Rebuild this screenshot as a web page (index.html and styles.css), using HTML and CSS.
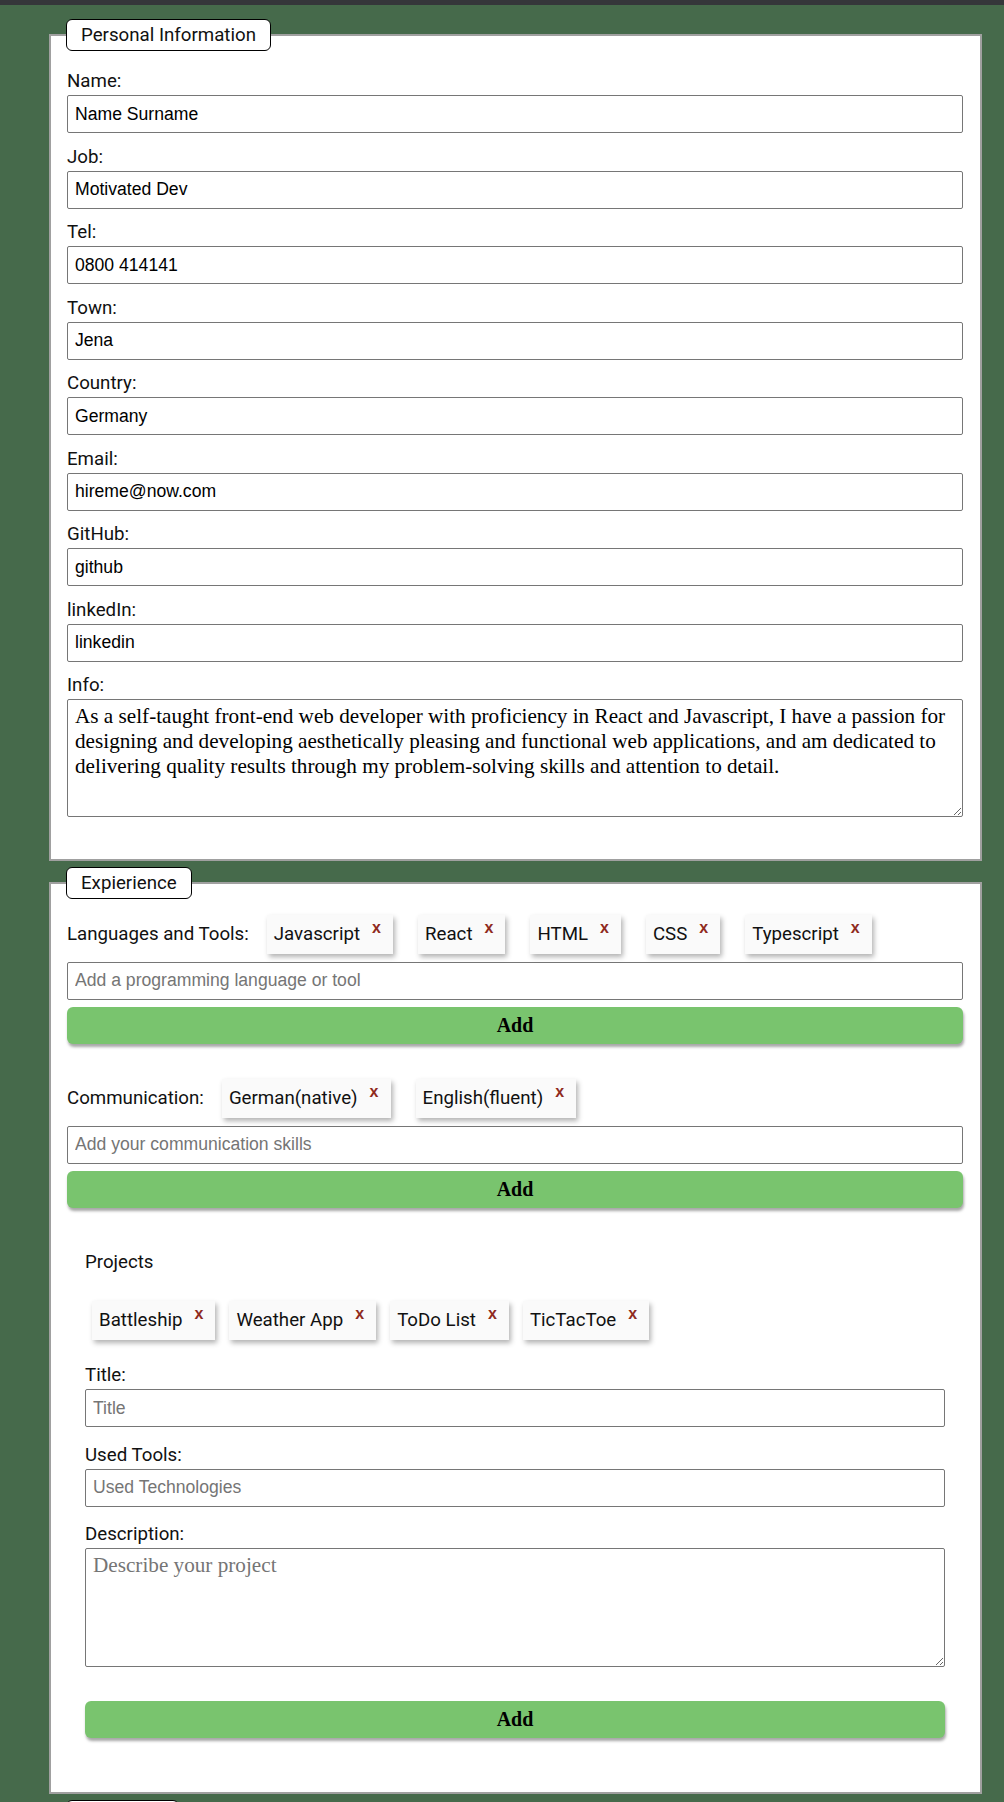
FILE: index.html
```html
<!DOCTYPE html>
<html lang="en">
<head>
<meta charset="utf-8">
<title>CV Editor</title>
<link rel="stylesheet" href="styles.css">
</head>
<body>
<div class="topbar"></div>
<form class="editor">
  <fieldset class="section personal">
    <legend>Personal Information</legend>
    <div class="field"><label>Name:</label><input class="text-input" value="Name Surname"></div>
    <div class="field"><label>Job:</label><input class="text-input" value="Motivated Dev"></div>
    <div class="field"><label>Tel:</label><input class="text-input" value="0800 414141"></div>
    <div class="field"><label>Town:</label><input class="text-input" value="Jena"></div>
    <div class="field"><label>Country:</label><input class="text-input" value="Germany"></div>
    <div class="field"><label>Email:</label><input class="text-input" value="hireme@now.com"></div>
    <div class="field"><label>GitHub:</label><input class="text-input" value="github"></div>
    <div class="field"><label>linkedIn:</label><input class="text-input" value="linkedin"></div>
    <div class="field last"><label>Info:</label><textarea class="text-area">As a self-taught front-end web developer with proficiency in React and Javascript, I have a passion for designing and developing aesthetically pleasing and functional web applications, and am dedicated to delivering quality results through my problem-solving skills and attention to detail.</textarea></div>
  </fieldset>

  <fieldset class="section experience">
    <legend>Expierience</legend>
    <div class="skill-row">
      <span class="row-label">Languages and Tools:</span>
      <span class="chip">Javascript<span class="remove">x</span></span>
      <span class="chip">React<span class="remove">x</span></span>
      <span class="chip">HTML<span class="remove">x</span></span>
      <span class="chip">CSS<span class="remove">x</span></span>
      <span class="chip">Typescript<span class="remove">x</span></span>
    </div>
    <input class="text-input add-input" placeholder="Add a programming language or tool">
    <button type="button" class="add-btn">Add</button>

    <div class="skill-row second">
      <span class="row-label">Communication:</span>
      <span class="chip">German(native)<span class="remove">x</span></span>
      <span class="chip">English(fluent)<span class="remove">x</span></span>
    </div>
    <input class="text-input add-input" placeholder="Add your communication skills">
    <button type="button" class="add-btn">Add</button>

    <div class="projects">
      <div class="projects-title">Projects</div>
      <div class="project-chips">
        <span class="chip">Battleship<span class="remove">x</span></span>
        <span class="chip">Weather App<span class="remove">x</span></span>
        <span class="chip">ToDo List<span class="remove">x</span></span>
        <span class="chip">TicTacToe<span class="remove">x</span></span>
      </div>
      <div class="field project-field first"><label>Title:</label><input class="text-input" placeholder="Title"></div>
      <div class="field project-field"><label>Used Tools:</label><input class="text-input" placeholder="Used Technologies"></div>
      <div class="field project-field"><label>Description:</label><textarea class="text-area desc" placeholder="Describe your project"></textarea></div>
      <button type="button" class="add-btn project-btn">Add</button>
    </div>
  </fieldset>

  <fieldset class="section education">
    <legend>Education</legend>
    <div class="field"><label>School:</label><input class="text-input" value="University"></div>
  </fieldset>
</form>
</body>
</html>
```

FILE: styles.css
```css
body {
  margin: 0;
  background: #466a4b;
  font-family: Roboto, "Noto Sans", sans-serif;
  color: #000;
}

.topbar {
  height: 5px;
  background: #35363a;
}

.editor {
  width: 933px;
  margin-left: 49px;
  padding-top: 14px;
}

.section {
  box-sizing: border-box;
  width: 100%;
  min-width: 0;
  margin: 0;
  border: 2px solid #a0a0a0;
  background: #fff;
  padding: 19px 17px 41.5px 16px;
}

.section + .section {
  margin-top: 6px;
}

.section legend {
  box-sizing: border-box;
  height: 32px;
  line-height: 30px;
  padding: 0 14px;
  margin-left: -1px;
  border: 1px solid #000;
  border-radius: 6px;
  background: #fff;
  font-size: 18.7px;
  color: #111;
}

.field {
  margin-bottom: 12.5px;
}

.field.last {
  margin-bottom: 0;
}

.field label {
  display: block;
  font-size: 18.7px;
  margin-bottom: 3px;
  color: #111;
}

.text-input {
  display: block;
  width: 100%;
  box-sizing: border-box;
  height: 38px;
  margin: 0;
  padding: 0 7px;
  border: 1px solid #767676;
  border-radius: 2px;
  background: #fff;
  color: #000;
  font: 17.6px "Liberation Sans", Arial, sans-serif;
}

.text-input::placeholder,
.text-area::placeholder {
  color: #757575;
}

.text-area {
  display: block;
  width: 100%;
  box-sizing: border-box;
  height: 118px;
  margin: 0;
  padding: 4px 7px;
  border: 1px solid #767676;
  border-radius: 2px;
  background: #fff;
  color: #000;
  font: 21.2px "Liberation Serif", "Times New Roman", serif;
}

/* Experience */
.experience {
  padding-top: 16px;
  padding-bottom: 54px;
}

.skill-row {
  display: flex;
  align-items: center;
  flex-wrap: wrap;
}

.skill-row.second {
  margin-top: 35px;
}

.row-label {
  font-size: 18.7px;
  margin-right: 18px;
  color: #111;
}

.chip {
  display: inline-block;
  box-sizing: border-box;
  height: 39px;
  line-height: 39px;
  padding: 0 12px 0 7px;
  background: #fafafa;
  box-shadow: 2px 3px 5px rgba(0, 0, 0, 0.3);
  font-size: 18.7px;
  color: #111;
  white-space: nowrap;
}

.skill-row .chip {
  margin-right: 25px;
}

.remove {
  margin-left: 12px;
  font: bold 16px "Liberation Sans", Arial, sans-serif;
  line-height: 0;
  vertical-align: 7px;
  color: #8f2a20;
  cursor: pointer;
}

.add-input {
  margin-top: 8px;
}

.add-btn {
  display: block;
  width: 100%;
  height: 37px;
  margin-top: 7px;
  border: none;
  border-radius: 6px;
  background: #79c46e;
  box-shadow: 1px 3px 3px rgba(0, 0, 0, 0.35);
  color: #000;
  font: bold 20px "Liberation Serif", "Times New Roman", serif;
  cursor: pointer;
}

.projects {
  padding: 0 18px;
  margin-top: 43.2px;
}

.projects-title {
  font-size: 18.7px;
  color: #111;
}

.project-chips {
  display: flex;
  margin-top: 28.4px;
}

.project-chips .chip {
  margin: 0 7px;
}

.project-field {
  margin-bottom: 0;
  margin-top: 16.5px;
}

.project-field.first {
  margin-top: 24px;
}

.text-area.desc {
  height: 119px;
}

.project-btn {
  margin-top: 34.4px;
}

.education {
  padding-top: 19px;
}
```
